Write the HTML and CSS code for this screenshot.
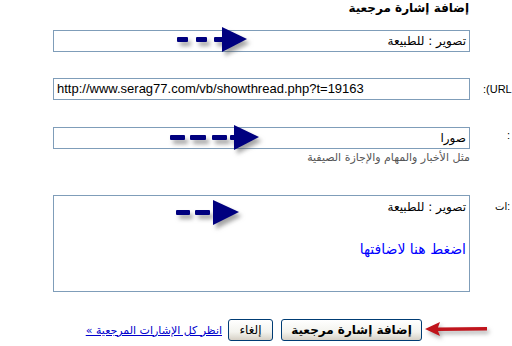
FILE: index.html
```html
<!DOCTYPE html>
<html lang="ar">
<head>
<meta charset="utf-8">
<title>إضافة إشارة مرجعية</title>
<link rel="stylesheet" href="styles.css">
</head>
<body>
<div class="page">
  <div class="row row-head">
    <div class="field"><h1 class="title">إضافة إشارة مرجعية</h1></div>
  </div>

  <div class="row row-1">
    <div class="field">
      <div class="input">تصوير : للطبيعة</div>
      <svg class="arrow arrow-1" width="80" height="30" viewBox="0 0 80 30">
        <g class="arrow-shape">
          <rect x="0" y="10" width="11" height="5" rx="1"/>
          <rect x="19" y="10" width="11" height="5" rx="1"/>
          <rect x="37" y="10" width="10" height="5" rx="1"/>
          <polygon points="45,0 70,12 45,25"/>
        </g>
      </svg>
    </div>
    <div class="label"></div>
  </div>

  <div class="row row-2">
    <div class="field">
      <div class="input ltr">http://www.serag77.com/vb/showthread.php?t=19163</div>
    </div>
    <div class="label">:(URL</div>
  </div>

  <div class="row row-3">
    <div class="field">
      <div class="input">صورا</div>
      <div class="help">مثل الأخبار والمهام والإجازة الصيفية</div>
      <svg class="arrow arrow-2" width="94" height="30" viewBox="0 0 94 30">
        <g class="arrow-shape">
          <rect x="0" y="10" width="15" height="5" rx="1"/>
          <rect x="20" y="10" width="16" height="5" rx="1"/>
          <rect x="42" y="10" width="15" height="5" rx="1"/>
          <rect x="60" y="10" width="6" height="5" rx="1"/>
          <polygon points="64,0 89,12 64,25"/>
        </g>
      </svg>
    </div>
    <div class="label label-3">:</div>
  </div>

  <div class="row row-4">
    <div class="field">
      <div class="textarea">
        <div class="ta-line">تصوير : للطبيعة</div>
        <div class="ta-link">اضغط هنا لاضافتها</div>
      </div>
      <svg class="arrow arrow-3" width="70" height="30" viewBox="0 0 70 30">
        <g class="arrow-shape">
          <rect x="0" y="10" width="14" height="5" rx="1"/>
          <rect x="19" y="10" width="15" height="5" rx="1"/>
          <polygon points="37,0 63,12 37,25"/>
        </g>
      </svg>
    </div>
    <div class="label label-4">ات:</div>
  </div>

  <div class="row row-5">
    <div class="actions">
      <button class="btn btn-main" type="button">إضافة إشارة مرجعية</button>
      <button class="btn btn-cancel" type="button">إلغاء</button>
      <a class="all-link" href="#">انظر كل الإشارات المرجعية »</a>
      <svg class="red-arrow" width="70" height="22" viewBox="0 0 70 22">
        <g class="red-shape">
          <polygon points="0,8 15,1 13,6.5 62,6 62,9.5 13,10 15,15"/>
        </g>
      </svg>
    </div>
  </div>
</div>
</body>
</html>
```

FILE: styles.css
```css
html, body {
  margin: 0;
  padding: 0;
  background: #ffffff;
  overflow: hidden;
}

body {
  width: 512px;
  height: 346px;
  font-family: "Liberation Sans", "DejaVu Sans", sans-serif;
  font-size: 12px;
  color: #000000;
}

.page {
  display: flex;
  flex-direction: column;
}

.row {
  display: flex;
  align-items: flex-start;
  padding-left: 53px;
}

.field {
  position: relative;
  width: 417px;
  flex: none;
  direction: rtl;
}

.label {
  margin-left: 13px;
  flex: none;
  direction: ltr;
  text-align: left;
  white-space: nowrap;
  font-size: 11px;
  line-height: 14px;
  font-family: "Liberation Sans", "DejaVu Sans", sans-serif;
}

.label-3 { margin-left: 37px; padding-top: 1px; }
.label-4 { margin-left: 25px; padding-top: 5px; font-size: 10px; }

.row-head { height: 18px; }
.title {
  margin: 0;
  font-size: 12px;
  font-weight: bold;
  line-height: 16px;
  text-align: right;
  padding-right: 1px;
  font-family: "DejaVu Sans", sans-serif;
}

.row-1 { margin-top: 12px; }
.row-2 { margin-top: 26px; align-items: center; }
.row-3 { margin-top: 27px; }
.row-4 { margin-top: 30px; }
.row-5 { margin-top: 27px; }

.input {
  box-sizing: border-box;
  height: 22px;
  border: 1px solid #7f9db9;
  background: #ffffff;
  padding: 0 3px;
  line-height: 20px;
  font-size: 12px;
  text-align: right;
  white-space: nowrap;
  overflow: hidden;
  font-family: "DejaVu Sans", sans-serif;
}

.input.ltr {
  direction: ltr;
  text-align: left;
  font-family: "Liberation Sans", sans-serif;
  font-size: 13px;
}

.help {
  font-size: 11px;
  line-height: 14px;
  color: #555555;
  text-align: right;
  margin-top: 2px;
  font-family: "DejaVu Sans", sans-serif;
}

.textarea {
  box-sizing: border-box;
  height: 97px;
  border: 1px solid #7f9db9;
  background: #ffffff;
  padding: 3px 3px;
  text-align: right;
  font-family: "DejaVu Sans", sans-serif;
}

.ta-line {
  font-size: 12px;
  line-height: 16px;
}

.ta-link {
  margin-top: 25px;
  font-size: 14px;
  line-height: 18px;
  color: #0000ff;
}

.arrow {
  position: absolute;
  overflow: visible;
  filter: drop-shadow(3px 4px 2px rgba(90, 90, 90, 0.55));
}

.arrow-shape { fill: #00007f; }

.arrow-1 { left: 124px; top: -3px; }
.arrow-2 { left: 117px; top: -2px; }
.arrow-3 { left: 123px; top: 5px; }

.actions {
  box-sizing: border-box;
  position: relative;
  width: 417px;
  display: flex;
  direction: rtl;
  align-items: center;
  gap: 4px;
  padding-right: 48px;
}

.btn {
  box-sizing: border-box;
  height: 22px;
  border: 1px solid #003c74;
  border-radius: 3px;
  background: linear-gradient(#ffffff, #f3f3ee 60%, #d6d0c5);
  font-family: "DejaVu Sans", sans-serif;
  font-size: 12px;
  color: #000000;
  padding: 0 8px;
  line-height: 18px;
  margin: 0;
}

.btn-main { width: 141px; font-weight: bold; }
.btn-cancel { width: 45px; margin-right: 4px; }

.all-link {
  color: #0000cc;
  text-decoration: underline;
  font-size: 11px;
  font-family: "DejaVu Sans", sans-serif;
  margin-right: 2px;
  white-space: nowrap;
}

.red-arrow {
  position: absolute;
  left: 372px;
  top: 2px;
  overflow: visible;
  filter: drop-shadow(2px 3px 2px rgba(90, 90, 90, 0.5));
}

.red-shape { fill: #c0141c; }
```
